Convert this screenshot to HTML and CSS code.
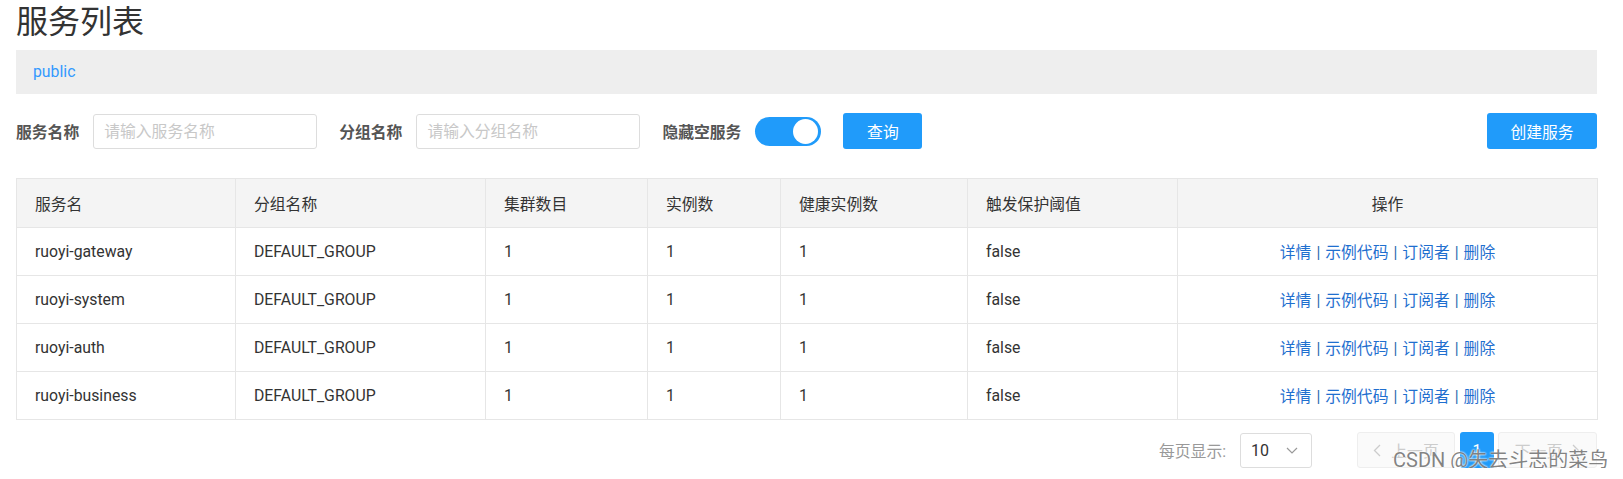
FILE: index.html
```html
<!DOCTYPE html>
<html lang="zh-CN">
<head>
  <meta charset="UTF-8" />
  <meta name="viewport" content="width=device-width, initial-scale=1.0"/>
  <title>服务列表</title>
  <link rel="stylesheet" href="styles.css">
</head>
<body>
  <div class="container">
    <h1 class="page-title">服务列表</h1>
    <div class="ns-bar"><span class="ns-name">public</span></div>

    <!-- Filters -->
    <div class="filter-row">
      <label class="filter-label">服务名称</label>
      <input class="filter-input" type="text" placeholder="请输入服务名称" />
      <label class="filter-label gap-left">分组名称</label>
      <input class="filter-input" type="text" placeholder="请输入分组名称" />
      <label class="filter-label gap-left">隐藏空服务</label>
      <span class="switch"><span class="knob"></span></span>
      <button class="btn btn-query">查询</button>
      <button class="btn btn-create">创建服务</button>
    </div>

    <table class="service-table">
      <colgroup>
        <col style="width:219px"><col style="width:250px"><col style="width:162px">
        <col style="width:133px"><col style="width:187px"><col style="width:210px"><col style="width:420px">
      </colgroup>
      <thead>
        <tr>
          <th>服务名</th>
          <th>分组名称</th>
          <th>集群数目</th>
          <th>实例数</th>
          <th>健康实例数</th>
          <th>触发保护阈值</th>
          <th class="center">操作</th>
        </tr>
      </thead>
      <tbody id="rows"></tbody>
    </table>

    <!-- Pagination -->
    <div class="pager">
      <span class="pager-label">每页显示:</span>
      <div class="page-size">
        <span>10</span>
        <svg width="12" height="7" viewBox="0 0 12 7"><path d="M1 1l5 5 5-5" fill="none" stroke="#999" stroke-width="1.2"/></svg>
      </div>
      <button class="page-btn prev" disabled>
        <svg width="8" height="13" viewBox="0 0 8 13"><path d="M7 1L1.5 6.5 7 12" fill="none" stroke="#ccc" stroke-width="1.3"/></svg>
        上一页
      </button>
      <button class="page-num">1</button>
      <button class="page-btn next" disabled>
        下一页
        <svg width="8" height="13" viewBox="0 0 8 13"><path d="M1 1l5.5 5.5L1 12" fill="none" stroke="#ccc" stroke-width="1.3"/></svg>
      </button>
    </div>

    <div class="watermark">CSDN @失去斗志的菜鸟</div>
  </div>

  <script>
    const services = ['ruoyi-gateway', 'ruoyi-system', 'ruoyi-auth', 'ruoyi-business'];
    const tbody = document.getElementById('rows');

    services.forEach(name => {
      const tr = document.createElement('tr');
      tr.innerHTML = `
        <td>${name}</td>
        <td>DEFAULT_GROUP</td>
        <td>1</td>
        <td>1</td>
        <td>1</td>
        <td>false</td>
        <td class="center actions">
          <a>详情</a><span class="sep">|</span><a>示例代码</a><span class="sep">|</span><a>订阅者</a><span class="sep">|</span><a>删除</a>
        </td>
      `;
      tbody.appendChild(tr);
    });
  </script>
</body>
</html>
```

FILE: styles.css
```css
body {
  margin: 0;
  font-family: Roboto, "Noto Sans CJK SC", sans-serif;
  font-size: 15.8px;
  color: #333;
  background: #fff;
}

.container {
  padding: 0 26px 0 16px;
  position: relative;
}

.page-title {
  margin: 0 0 6px;
  font-size: 32px;
  font-weight: normal;
  line-height: 44px;
  color: #333;
}

.ns-bar {
  height: 44px;
  line-height: 44px;
  background: #eee;
  padding-left: 17px;
}

.ns-name {
  color: #3399ff;
}

.filter-row {
  display: flex;
  align-items: center;
  margin-top: 19px;
  height: 36px;
}

.filter-label {
  font-size: 15.8px;
  font-weight: bold;
  color: #555;
  margin-right: 14px;
}

.filter-label.gap-left {
  margin-left: 22px;
}

.filter-input {
  width: 224px;
  height: 35px;
  box-sizing: border-box;
  border: 1px solid #ddd;
  border-radius: 3px;
  padding: 0 10px;
  font-family: inherit;
  font-size: 15.8px;
  color: #333;
  outline: none;
}

.filter-input::placeholder {
  color: #c8c8c8;
}

.switch {
  display: inline-flex;
  align-items: center;
  justify-content: flex-end;
  width: 66px;
  height: 29px;
  box-sizing: border-box;
  padding: 0 3px;
  border-radius: 15px;
  background: #209bfa;
}

.knob {
  width: 25px;
  height: 25px;
  border-radius: 50%;
  background: #fff;
}

.btn {
  height: 36px;
  border: none;
  border-radius: 3px;
  background: #209bfa;
  color: #fff;
  font-family: inherit;
  font-size: 15.8px;
  cursor: pointer;
}

.btn-query {
  width: 79px;
  margin-left: 22px;
}

.btn-create {
  width: 110px;
  margin-left: auto;
}

.service-table {
  width: 1581px;
  margin-top: 29px;
  border-collapse: collapse;
  table-layout: fixed;
  border: 1px solid #e6e6e6;
}

.service-table th,
.service-table td {
  border: 1px solid #e6e6e6;
  padding: 0 18px;
  text-align: left;
  font-weight: normal;
  white-space: nowrap;
}

.service-table th {
  height: 48px;
  background: #f4f4f4;
  color: #333;
}

.service-table td {
  height: 47px;
}

.service-table .center {
  text-align: center;
}

.actions a {
  color: #1f6fcf;
  cursor: pointer;
}

.actions .sep {
  color: #2a6ab0;
  margin: 0 5px;
}

.pager {
  display: flex;
  justify-content: flex-end;
  align-items: center;
  margin-top: 12px;
  height: 36px;
}

.pager-label {
  color: #999;
  margin-right: 14px;
}

.page-size {
  width: 72px;
  height: 35px;
  box-sizing: border-box;
  border: 1px solid #ddd;
  border-radius: 3px;
  display: flex;
  align-items: center;
  justify-content: space-between;
  padding: 0 13px 0 10px;
  font-size: 16px;
  color: #333;
  margin-right: 45px;
}

.page-btn {
  height: 36px;
  box-sizing: border-box;
  border: 1px solid #eee;
  border-radius: 3px;
  background: #fafafa;
  color: #ccc;
  font-family: inherit;
  font-size: 15.8px;
  display: flex;
  align-items: center;
  justify-content: center;
  gap: 10px;
}

.page-btn.prev {
  width: 98px;
}

.page-btn.next {
  width: 99px;
}

.page-num {
  width: 34px;
  height: 36px;
  margin: 0 4px 0 5px;
  border: none;
  border-radius: 3px;
  background: #209bfa;
  color: #fff;
  font-family: inherit;
  font-size: 15.8px;
}

.watermark {
  position: absolute;
  left: 1393px;
  top: 444px;
  font-size: 20px;
  color: rgba(90, 90, 90, 0.75);
  text-shadow: 0 0 2px #fff, 0 0 2px #fff;
  white-space: nowrap;
}
```
